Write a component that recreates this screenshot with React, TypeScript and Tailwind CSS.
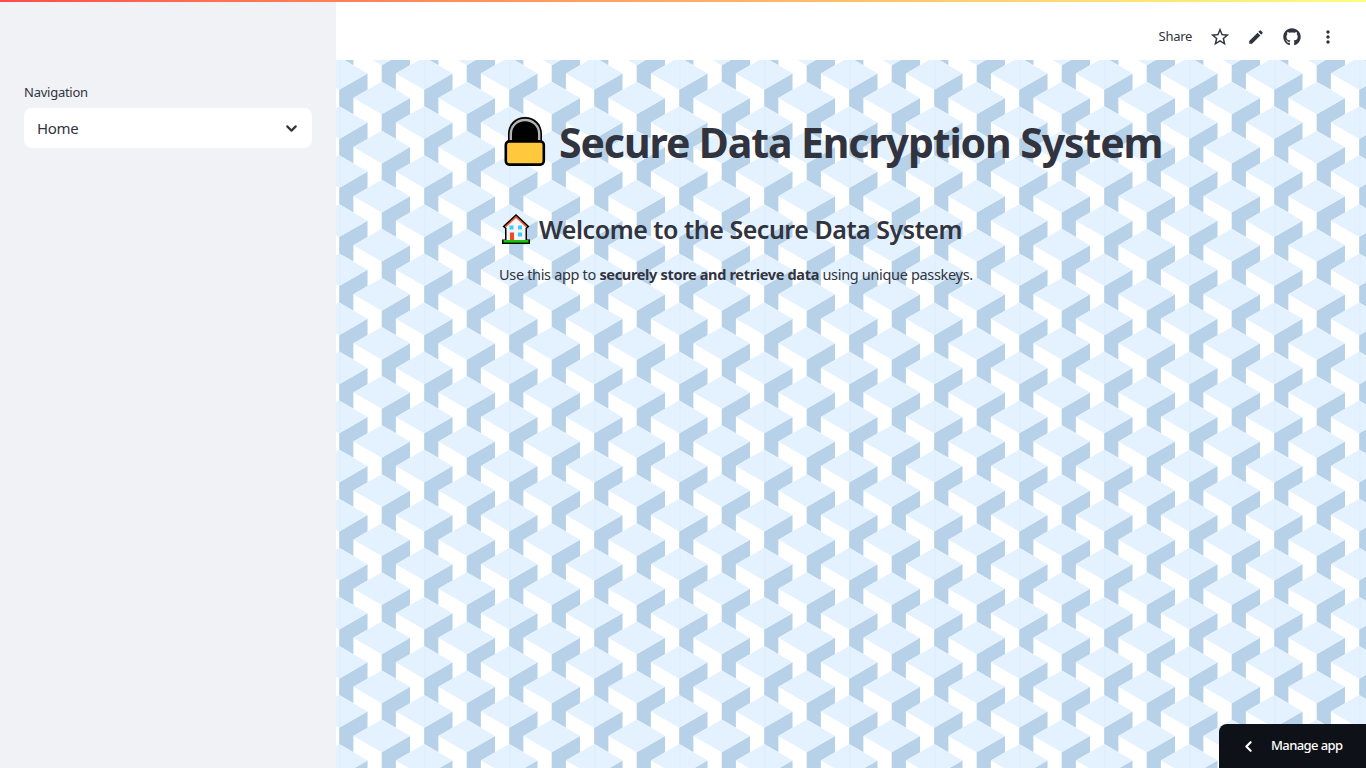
import { ChevronDown, ChevronLeft } from "lucide-react";
import { FaGithub } from "react-icons/fa";
import { MdEdit, MdMoreVert, MdOutlineStarBorder } from "react-icons/md";

// Cube wallpaper, built once as two path strings
const W = 1030;
const H = 708;
const A = 85 / 3;
const B = 49.07 / 3;
const ORIGIN_X = 45.7;
const ORIGIN_Y = 38;

const buildCubes = () => {
  let light = "";
  let dark = "";
  for (let row = -3; row < 32; row++) {
    for (let col = -2; col < 15; col++) {
      const x = ORIGIN_X + col * 85 + (row % 2 === 0 ? 0 : 42.5);
      const y = ORIGIN_Y + (row * 49.07) / 2;
      const pt = (dx: number, dy: number) => `${(x + dx).toFixed(2)} ${(y + dy).toFixed(2)}`;
      light += `M${pt(-A, 0)}L${pt(0, -B)}L${pt(A, 0)}L${pt(0, B)}Z`;
      dark += `M${pt(0, B)}L${pt(A, 0)}L${pt(A, B)}L${pt(A / 2, 1.5 * B)}L${pt(A / 2, 2.5 * B)}L${pt(0, 2 * B)}Z`;
    }
  }
  return { light, dark };
};

const cubes = buildCubes();
const seams = Array.from({ length: 13 }, (_, i) => 3.5 + i * 85);

const CubeBackground = () => (
  <svg className="absolute inset-0 h-full w-full" viewBox={`0 0 ${W} ${H}`} preserveAspectRatio="xMinYMin slice">
    <rect width={W} height={H} fill="#ffffff" />
    <path d={cubes.dark} fill="#b6d1e8" />
    <path d={cubes.light} fill="#e3f2fe" />
    {seams.map((x) => (
      <rect key={x} x={x} y={0} width={1} height={H} fill="#a8cdee" opacity={0.12} />
    ))}
  </svg>
);

const LockEmoji = () => (
  <svg width="42" height="50" viewBox="0 0 42 50" className="shrink-0">
    <path d="M4 28V17C4 7 11 0 21 0S38 7 38 17V28Z" fill="#000000" />
    <path d="M6.8 26V17C6.8 9 13 3 21 3S35.2 9 35.2 17V26" fill="none" stroke="#b4b4b4" strokeWidth="2.4" />
    <rect x="1.8" y="24.4" width="38" height="23.2" rx="3.5" fill="#ffc83d" stroke="#000000" strokeWidth="2.6" />
  </svg>
);

const HouseEmoji = () => (
  <svg width="28" height="30" viewBox="0 0 28 30" className="shrink-0">
    <path d="M14 0L27.5 12.5L25 14.5V25.5H28V30H0V25.5H3V14.5L0.5 12.5Z" fill="#000000" />
    <path d="M14 2.5L25 12.8L23.5 14V26H4.5V14L3 12.8Z" fill="#f5f5f5" />
    <path d="M3.5 12.6L14 3L24.5 12.6" fill="none" stroke="#f0512d" strokeWidth="1.6" />
    <rect x="7.5" y="11.5" width="4" height="4" fill="#35d0ff" />
    <rect x="16" y="11.5" width="4" height="4" fill="#35d0ff" />
    <rect x="16" y="18.5" width="4" height="4" fill="#35d0ff" />
    <rect x="8" y="18.5" width="4" height="8" fill="#f0481f" />
    <rect x="1.5" y="26" width="25" height="2.6" fill="#16c60c" />
  </svg>
);

export default function App() {
  return (
    <div className="relative flex h-screen w-full overflow-hidden bg-white font-['Noto_Sans',sans-serif] text-[#31333f]">
      {/* top decoration */}
      <div className="absolute inset-x-0 top-0 z-20 h-0.5 bg-gradient-to-r from-[#ff4b4b] to-[#fffd80]" />

      {/* sidebar */}
      <aside className="w-[336px] shrink-0 bg-[#f0f2f6] px-6 pt-[83px]">
        <div className="text-[13px] leading-[18px] tracking-[-0.25px]">Navigation</div>
        <div className="mt-[7px] flex h-10 items-center justify-between rounded-lg bg-white pl-[13px] pr-3">
          <span className="text-[15px] tracking-[-0.3px]">Home</span>
          <ChevronDown size={17} strokeWidth={3} />
        </div>
      </aside>

      <div className="flex min-w-0 flex-1 flex-col">
        {/* header */}
        <header className="flex h-[60px] shrink-0 items-center justify-end bg-white pr-[28px] pt-[14px]">
          <span className="mr-[17px] text-[13px] tracking-[-0.3px]">Share</span>
          <div className="flex items-center gap-[14px]">
            <MdOutlineStarBorder size={22} />
            <MdEdit size={18} className="mx-[2px]" />
            <FaGithub size={18} className="ml-[2px] mr-[3px]" />
            <MdMoreVert size={20} />
          </div>
        </header>

        {/* main */}
        <main className="relative flex-1 overflow-hidden">
          <CubeBackground />
          <div className="relative mx-auto w-[704px] pt-[56px]">
            <div className="flex h-[52px] items-center pl-[5px]">
              <LockEmoji />
              <h1 className="ml-[13px] whitespace-nowrap text-[41px] font-bold leading-none tracking-[-1.1px]">
                Secure Data Encryption System
              </h1>
            </div>
            <div className="mt-[45px] flex h-8 items-center pl-[3px]">
              <HouseEmoji />
              <h2 className="ml-[9px] whitespace-nowrap text-[25px] font-semibold leading-none tracking-[-0.47px]">
                Welcome to the Secure Data System
              </h2>
            </div>
            <p className="mt-[17px] whitespace-nowrap text-[14.5px] leading-6 tracking-[-0.33px]">
              Use this app to <strong className="font-bold">securely store and retrieve data</strong> using unique
              passkeys.
            </p>
          </div>
        </main>
      </div>

      {/* manage app */}
      <div className="absolute bottom-0 right-0 z-10 flex h-11 w-[147px] items-center rounded-tl-lg bg-[#0e1117] pl-[21px] text-white">
        <ChevronLeft size={17} strokeWidth={3} />
        <span className="ml-[14px] text-[13px] font-medium tracking-[-0.6px]">Manage app</span>
      </div>
    </div>
  );
}
